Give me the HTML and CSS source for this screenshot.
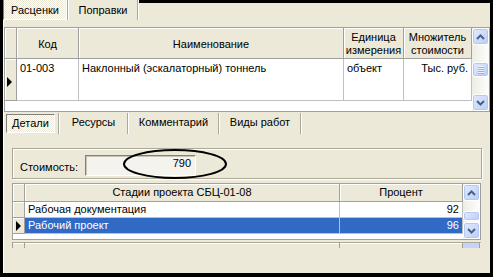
FILE: index.html
```html
<!DOCTYPE html>
<html lang="ru">

<head>
    <meta charset="UTF-8">
    <meta name="viewport" content="width=device-width, initial-scale=1.0">
    <title>Расценки</title>

    <link rel="stylesheet" href="styles.css">
</head>

<body>
    <div class="screen">
        <div class="window">

            <!-- Top tabs -->
            <div class="tabs topTabs">
                <div class="tab pressed tabRates">Расценки</div>
                <span class="sep"></span>
                <div class="tab tabFixes">Поправки</div>
                <span class="sep"></span>
                <div class="tabFiller"></div>
            </div>

            <div class="page">
                <!-- Rates grid -->
                <div class="grid mainGrid">
                    <div class="cells">
                        <div class="row head">
                            <div class="cell ind"></div>
                            <div class="cell colCode">Код</div>
                            <div class="cell colName">Наименование</div>
                            <div class="cell colUnit">Единица<br>измерения</div>
                            <div class="cell colMult">Множитель<br>стоимости</div>
                        </div>
                        <div class="row data">
                            <div class="cell ind"><span class="arrow"></span></div>
                            <div class="cell colCode">01-003</div>
                            <div class="cell colName">Наклонный (эскалаторный) тоннель</div>
                            <div class="cell colUnit">объект</div>
                            <div class="cell colMult num">Тыс. руб.</div>
                        </div>
                    </div>
                    <div class="scroll">
                        <div class="sbBtn">
                            <svg width="9" height="6" viewBox="0 0 9 6"><path d="M1 5 L4.5 1.5 L8 5" fill="none" stroke="#4d6185" stroke-width="2"/></svg>
                        </div>
                        <div class="sbTrack">
                            <div class="sbThumb thumbMain">
                                <i></i><i></i><i></i><i></i>
                            </div>
                        </div>
                        <div class="sbBtn">
                            <svg width="9" height="6" viewBox="0 0 9 6"><path d="M1 1 L4.5 4.5 L8 1" fill="none" stroke="#4d6185" stroke-width="2"/></svg>
                        </div>
                    </div>
                </div>

                <!-- Detail tabs -->
                <div class="tabs subTabs">
                    <div class="tab pressed tabDetails">Детали</div>
                    <span class="sep"></span>
                    <div class="tab tabRes">Ресурсы</div>
                    <span class="sep"></span>
                    <div class="tab tabComment">Комментарий</div>
                    <span class="sep"></span>
                    <div class="tab tabWorks">Виды работ</div>
                    <span class="sep"></span>
                </div>

                <!-- Cost box -->
                <div class="group">
                    <span class="costLabel">Стоимость:</span>
                    <div class="costField">790</div>
                    <svg class="mark" width="108" height="34" viewBox="0 0 108 34">
                        <ellipse cx="54" cy="17" rx="51" ry="14" fill="none" stroke="#000" stroke-width="2"/>
                    </svg>
                </div>

                <!-- Stages grid -->
                <div class="grid stageGrid">
                    <div class="cells">
                        <div class="row head">
                            <div class="cell ind"></div>
                            <div class="cell colStage">Стадии проекта СБЦ-01-08</div>
                            <div class="cell colPct">Процент</div>
                        </div>
                        <div class="row data">
                            <div class="cell ind"></div>
                            <div class="cell colStage">Рабочая документация</div>
                            <div class="cell colPct num">92</div>
                        </div>
                        <div class="row data selected">
                            <div class="cell ind"><span class="arrow"></span></div>
                            <div class="cell colStage">Рабочий проект</div>
                            <div class="cell colPct num">96</div>
                        </div>
                    </div>
                    <div class="scroll">
                        <div class="sbBtn">
                            <svg width="9" height="6" viewBox="0 0 9 6"><path d="M1 5 L4.5 1.5 L8 5" fill="none" stroke="#4d6185" stroke-width="2"/></svg>
                        </div>
                        <div class="sbTrack">
                            <div class="sbThumb thumbStage"></div>
                        </div>
                        <div class="sbBtn">
                            <svg width="9" height="6" viewBox="0 0 9 6"><path d="M1 1 L4.5 4.5 L8 1" fill="none" stroke="#4d6185" stroke-width="2"/></svg>
                        </div>
                    </div>
                </div>
                <div class="gridTail">
                    <span class="tailInd"></span>
                    <span class="tailStage"></span>
                    <span class="tailPct"></span>
                    <span class="tailScroll"></span>
                </div>
            </div>

        </div>
    </div>
</body>

</html>
```

FILE: styles.css
```css
body {
    margin: 0;
    background: #000;
    font-family: "Liberation Sans", Arial, sans-serif;
    font-size: 11px;
    color: #000;
}

.screen {
    width: 493px;
    height: 277px;
    box-sizing: border-box;
    padding: 0 3px 4px 3px;
    background: #000;
}

.window {
    height: 100%;
    background: #ece9d8;
    display: flex;
    flex-direction: column;
}

/* tabs */
.tabs {
    display: flex;
}

.tab {
    box-sizing: border-box;
    text-align: center;
    white-space: nowrap;
}

.pressed {
    background: repeating-conic-gradient(#fff 0 25%, #ece9d8 0 50%) 0 0 / 2px 2px;
    border: 1px solid;
    border-color: #808080 #fff #fff #808080;
}

.sep {
    width: 1px;
    background: #aca899;
    border-right: 1px solid #fff;
}

.topTabs {
    height: 20px;
}

.topTabs .tab {
    height: 20px;
    line-height: 20px;
}

.topTabs .pressed {
    border-top: none;
}

.tabRates {
    width: 64px;
}

.tabFixes {
    width: 68px;
}

.tabFiller {
    flex: 1;
    border-top: 3px solid #000;
}

.page {
    flex: 1;
    border-left: 1px solid #fff;
    display: flex;
    flex-direction: column;
    align-items: flex-start;
}

.subTabs {
    height: 21px;
    margin-top: 1px;
    padding-left: 2px;
}

.subTabs .tab {
    height: 19px;
    line-height: 17px;
    margin-top: 1px;
}

.subTabs .pressed {
    margin-right: 3px;
}

.tabDetails {
    width: 49px;
}

.tabRes {
    width: 67px;
}

.tabComment {
    width: 89px;
}

.tabWorks {
    width: 80px;
}

/* grids */
.grid {
    box-sizing: border-box;
    border: 1px solid #a0a0a0;
    background: #fff;
    display: flex;
}

.cells {
    flex: 1;
    display: flex;
    flex-direction: column;
}

.row {
    display: flex;
}

.cell {
    box-sizing: border-box;
    border-right: 1px solid #c0c0c0;
    border-bottom: 1px solid #c0c0c0;
    padding: 0 3px;
    white-space: nowrap;
    overflow: hidden;
    line-height: 13px;
}

.head .cell {
    background: #ece9d8;
    border-color: #a0a0a0;
    box-shadow: inset 1px 1px 0 #fff;
    display: flex;
    align-items: center;
    justify-content: center;
    text-align: center;
}

.cell.ind {
    background: #ece9d8;
    border-color: #a0a0a0;
    box-shadow: inset 1px 1px 0 #fff;
    padding: 0;
}

.num {
    text-align: right;
}

.arrow {
    display: block;
    width: 0;
    height: 0;
    border-left: 5px solid #000;
    border-top: 5px solid transparent;
    border-bottom: 5px solid transparent;
}

.mainGrid {
    width: 486px;
    height: 85px;
    margin-top: 7px;
}

.mainGrid .head .cell {
    height: 31px;
    padding-top: 2px;
}

.mainGrid .data .cell {
    height: 42px;
    padding-top: 3px;
}

.mainGrid .ind {
    width: 12px;
}

.mainGrid .ind .arrow {
    margin: 15px 0 0 2px;
}

.colCode {
    width: 62px;
}

.colName {
    width: 265px;
}

.colUnit {
    width: 60px;
}

.colMult {
    width: 68px;
}

.stageGrid {
    width: 469px;
    height: 57px;
    margin: 4px 0 0 8px;
}

.stageGrid .head .cell {
    height: 18px;
}

.stageGrid .data .cell {
    height: 16px;
    padding-top: 1px;
}

.stageGrid .ind {
    width: 12px;
}

.stageGrid .ind .arrow {
    margin: 2px 0 0 3px;
}

.colStage {
    width: 315px;
}

.colPct {
    width: 123px;
}

.selected .cell:not(.ind) {
    background: #316ac5;
    color: #fff;
}

.gridTail {
    display: flex;
    width: 469px;
    height: 5px;
    margin: 2px 0 0 8px;
    border-top: 1px solid #aca899;
    box-shadow: inset 0 1px 0 #fff;
}

.gridTail span {
    box-sizing: border-box;
    border-right: 1px solid #a0a0a0;
}

.tailInd {
    width: 13px;
    border-left: 1px solid #a0a0a0;
}

.tailStage {
    width: 315px;
}

.tailPct {
    width: 123px;
}

.tailScroll {
    width: 17px;
    background: #c4d3f7;
}

/* xp scrollbar */
.scroll {
    width: 17px;
    display: flex;
    flex-direction: column;
    background: linear-gradient(to right, #eeede5, #fdfdfa);
}

.sbBtn,
.sbThumb {
    box-sizing: border-box;
    border: 1px solid #fff;
    border-radius: 3px;
    background: linear-gradient(135deg, #e3ebfd, #b9cdf7);
    box-shadow: inset 0 0 0 1px #b4c8f0;
}

.sbBtn {
    height: 17px;
    display: flex;
    align-items: center;
    justify-content: center;
}

.sbTrack {
    flex: 1;
}

.thumbMain {
    height: 15px;
    margin-top: 17px;
    display: flex;
    flex-direction: column;
    align-items: center;
    justify-content: center;
    gap: 1px;
}

.thumbMain i {
    width: 6px;
    height: 1px;
    background: #eef4fe;
    border-bottom: 1px solid #8cb0f8;
    margin-bottom: -1px;
}

.thumbStage {
    height: 10px;
    margin-top: 10px;
}

/* cost box */
.group {
    position: relative;
    box-sizing: border-box;
    width: 470px;
    height: 31px;
    margin: 14px 0 0 8px;
    border: 1px solid #aca899;
    box-shadow: inset 1px 1px 0 #fff, 1px 1px 0 #fff;
    display: flex;
    align-items: flex-start;
    padding-left: 7px;
}

.costLabel {
    width: 65px;
    margin-top: 12px;
    line-height: 13px;
}

.costField {
    box-sizing: border-box;
    width: 111px;
    height: 21px;
    margin-top: 6px;
    padding-right: 4px;
    line-height: 15px;
    text-align: right;
    background: #f4f3ee;
    border: 1px solid;
    border-color: #808080 #fff #fff #808080;
    box-shadow: inset 1px 1px 0 #c8c5b8;
}

.mark {
    position: absolute;
    left: 108px;
    top: -2px;
}
```
